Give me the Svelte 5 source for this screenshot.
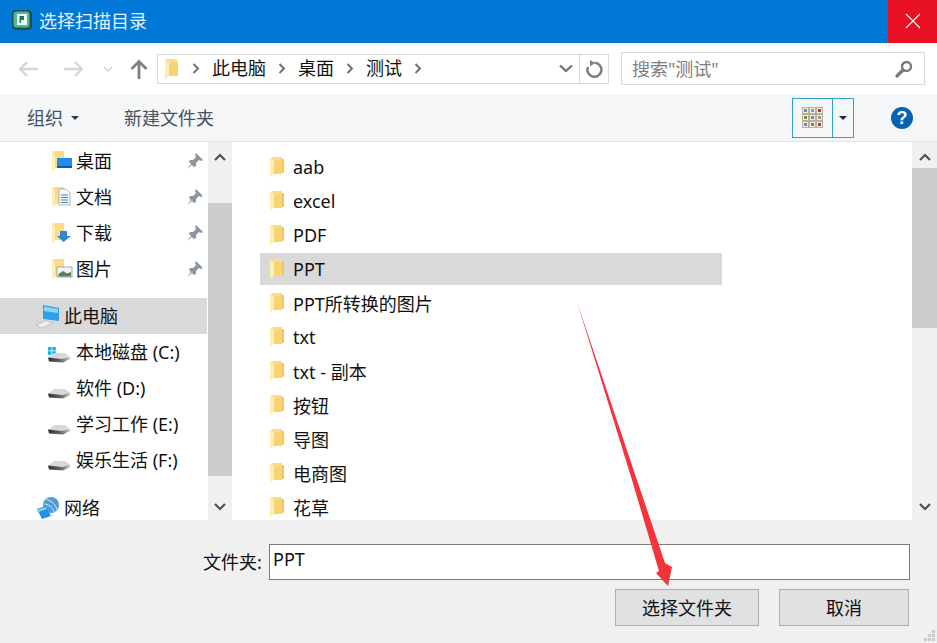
<script>
  const quick = [
    { name: '桌面', kind: 'desktop' },
    { name: '文档', kind: 'docs' },
    { name: '下载', kind: 'down' },
    { name: '图片', kind: 'pics' }
  ];
  const drives = [
    { name: '本地磁盘 (C:)', win: true },
    { name: '软件 (D:)' },
    { name: '学习工作 (E:)' },
    { name: '娱乐生活 (F:)' }
  ];
  const crumbs = ['此电脑', '桌面', '测试'];
  const folders = ['aab', 'excel', 'PDF', 'PPT', 'PPT所转换的图片', 'txt', 'txt - 副本', '按钮', '导图', '电商图', '花草'];
  const grid = ['#5b8fc7', '#8fa860', '#c8323c', '#8c8a2c', '#5b8fc7', '#8fa860', '#6f86b8', '#7c7f50', '#c8323c'];
</script>

{#snippet folder()}
  <svg class="folder" width="16" height="22" viewBox="0 0 16 22">
    <path d="M1 2 L4 1 H13 V18 H4 L1 21 Z" fill="#fbdc8c" />
    <path d="M1 2 L5 4 V18 L1 21 Z" fill="#fdeeb8" />
    <path d="M12 3 H15 V17 H12 Z" fill="#f3c55e" />
    <path d="M5 4 H13 V18 H5 Z" fill="#f9d274" />
  </svg>
{/snippet}

{#snippet pin()}
  <svg class="pin" width="18" height="18" viewBox="0 0 18 18">
    <path d="M10 1 L17 8 L15 9 L13 8 L10 11 L10 14 L8 15 L3 10 L4 8 L7 8 L10 5 L9 3 Z" fill="#8c96a0" />
    <path d="M5 12 L1 17 L6 13 Z" fill="#8c96a0" />
  </svg>
{/snippet}

{#snippet drive(win)}
  <svg class="drive" width="24" height="22" viewBox="0 0 24 22">
    <defs>
      <linearGradient id="strip" x1="0" x2="1" y1="0" y2="0">
        <stop offset="0" stop-color="#2e2e2e" />
        <stop offset="0.6" stop-color="#6a6a6a" />
        <stop offset="1" stop-color="#c8c8c8" />
      </linearGradient>
    </defs>
    {#if win}
      <path d="M1 6 h3.5 v3.5 h-3.5 Z M5.3 6 h3.5 v3.5 h-3.5 Z M1 10.3 h3.5 v3.5 h-3.5 Z M5.3 10.3 h3.5 v3.5 h-3.5 Z" fill="#12b4e4" />
    {/if}
    <path d="M1 17 L7 12 H18 L23 16 L16 19 Z" fill="#d8d8d8" />
    <path d="M1 16.5 L15 18 L23 16 V18 L16 21.5 L2 20.5 Z" fill="url(#strip)" />
  </svg>
{/snippet}

<div class="dialog">
  <header class="title">
    <svg class="appicon" width="20" height="20" viewBox="0 0 20 20">
      <rect x="0" y="0" width="20" height="20" rx="4" fill="#1e4f49" />
      <rect x="1.5" y="1.5" width="16" height="16" rx="3" fill="#52b79c" />
      <rect x="5" y="4" width="10" height="11" fill="#eef7f3" />
      <path d="M7.5 6 h4.5 v4 h-3 v3 h-1.5 Z" fill="#1c7a66" />
    </svg>
    <span class="title-text">选择扫描目录</span>
    <button class="close" aria-label="关闭">
      <svg width="16" height="16" viewBox="0 0 16 16"><path d="M1 1 L15 15 M15 1 L1 15" stroke="#fff" stroke-width="1.1" /></svg>
    </button>
  </header>

  <nav class="nav">
    <svg class="nav-back" width="22" height="18" viewBox="0 0 22 18"><path d="M21 9 H3 M10 2 L3 9 L10 16" fill="none" stroke="#d6d6d6" stroke-width="2.4" /></svg>
    <svg class="nav-forward" width="22" height="18" viewBox="0 0 22 18"><path d="M1 9 H19 M12 2 L19 9 L12 16" fill="none" stroke="#d6d6d6" stroke-width="2.4" /></svg>
    <svg class="nav-recent" width="10" height="6" viewBox="0 0 10 6"><path d="M1 1 L5 5 L9 1" fill="none" stroke="#d6d6d6" stroke-width="1.6" /></svg>
    <svg class="nav-up" width="18" height="20" viewBox="0 0 18 20"><path d="M9 20 V3 M1.5 10 L9 2.5 L16.5 10" fill="none" stroke="#808080" stroke-width="2.8" /></svg>
    <div class="address">
      <svg class="addr-folder" width="16" height="22" viewBox="0 0 16 22">
        <path d="M1 2 L4 1 H13 V18 H4 L1 21 Z" fill="#fbdc8c" />
        <path d="M1 2 L5 4 V18 L1 21 Z" fill="#fdeeb8" />
        <path d="M5 4 H14 V18 H5 Z" fill="#f9d274" />
      </svg>
      <div class="crumbs">
        {#each crumbs as c}
          <svg class="chev" width="8" height="11" viewBox="0 0 8 11"><path d="M1.5 1 L6 5.5 L1.5 10" fill="none" stroke="#6e6e6e" stroke-width="1.9" /></svg>
          <span class="shift">{c}</span>
        {/each}
        <svg class="chev" width="8" height="11" viewBox="0 0 8 11"><path d="M1.5 1 L6 5.5 L1.5 10" fill="none" stroke="#6e6e6e" stroke-width="1.9" /></svg>
      </div>
      <svg class="addr-drop" width="14" height="9" viewBox="0 0 14 9"><path d="M1 1.5 L7 7 L13 1.5" fill="none" stroke="#6e6e6e" stroke-width="2.2" /></svg>
      <div class="addr-refresh">
        <svg width="18" height="18" viewBox="0 0 18 18"><path d="M9.5 2.8 A7 7 0 1 1 3 7" fill="none" stroke="#808080" stroke-width="2.6" /><path d="M5 0 L10 3 L5 6.5 Z" fill="#808080" /></svg>
      </div>
    </div>
    <div class="search">
      <span class="shift">搜索"测试"</span>
      <svg width="18" height="18" viewBox="0 0 18 18"><circle cx="11.5" cy="6.5" r="4.5" fill="none" stroke="#7a7a7a" stroke-width="2.4" /><path d="M8 10 L2 16" stroke="#7a7a7a" stroke-width="3.2" stroke-linecap="round" /></svg>
    </div>
  </nav>

  <div class="toolbar">
    <span class="shift">组织</span>
    <svg class="caret" width="8" height="4" viewBox="0 0 8 4"><path d="M0 0 H8 L4 4 Z" fill="#2c3a4a" /></svg>
    <span class="shift new">新建文件夹</span>
    <div class="view">
      <div class="view-main">
        <div class="thumbs">
          {#each grid as color}
            <i class="thumb"><b style="background:{color}"></b></i>
          {/each}
        </div>
      </div>
      <div class="view-drop">
        <svg width="8" height="4" viewBox="0 0 8 4"><path d="M0 0 H8 L4 4 Z" fill="#1c2a44" /></svg>
      </div>
    </div>
    <div class="help">?</div>
  </div>

  <main class="main">
    <aside class="side">
      <div class="side-list">
        {#each quick as q}
          <div class="row quick">
            <span class="quick-icon">
              <svg width="24" height="22" viewBox="0 0 24 22">
                <path d="M1 2 L4 1 H13 V18 H4 L1 21 Z" fill="#fbdc8c" />
                <path d="M1 2 L4 4 V18 L1 21 Z" fill="#fdeeb8" />
                {#if q.kind === 'desktop'}
                  <rect x="6" y="8" width="15" height="10" fill="#1f8ee8" />
                  <rect x="6" y="16" width="15" height="2" fill="#0c5aa8" />
                {:else if q.kind === 'docs'}
                  <path d="M8 3 H15 L19 7 V19 H8 Z" fill="#f7f9fb" stroke="#9aa5b2" stroke-width="0.8" />
                  <path d="M10 9 H17 M10 11.5 H17 M10 14 H17 M10 16.5 H17" stroke="#3d87c8" stroke-width="1" />
                {:else if q.kind === 'down'}
                  <path d="M9 9 H16 V14 H20 L12.5 20 L6 14 H9 Z" fill="#2f87d6" />
                {:else}
                  <rect x="6" y="9" width="15" height="10" fill="#f3f5f7" stroke="#8d99a5" stroke-width="0.8" />
                  <path d="M7.5 16 L12 13 L16 15.5 L20 14 V18.5 H7.5 Z" fill="#5d7a64" />
                {/if}
              </svg>
            </span>
            <span class="label shift">{q.name}</span>
            {@render pin()}
          </div>
        {/each}

        <div class="row pc">
          <svg width="26" height="24" viewBox="0 0 26 24">
            <path d="M8 1 L24 4 V17 L8 15 Z" fill="#2f9fe6" />
            <path d="M9 2.5 L23 5 V9 L9 7 Z" fill="#8fd6f8" />
            <path d="M1 21 L11 16.5 L18 19 L7 24 Z" fill="#eceef0" stroke="#b4babf" stroke-width="0.8" />
          </svg>
          <span class="label shift">此电脑</span>
        </div>

        {#each drives as d}
          <div class="row dr">
            {@render drive(d.win)}
            <span class="label shift">{d.name}</span>
          </div>
        {/each}

        <div class="row net">
          <svg width="24" height="24" viewBox="0 0 24 24">
            <circle cx="15" cy="9" r="8" fill="#4e9bd8" />
            <path d="M10 3 C16 5 20 9 21 14 M8 8 C12 8 17 11 18 16" fill="none" stroke="#d6ecf9" stroke-width="1" />
            <path d="M1 13 L10 10 L15 20 L6 23 Z" fill="#1f93e0" />
            <path d="M1 14 L10 11 L11 13 L2 16 Z" fill="#8bd2f5" />
          </svg>
          <span class="label shift">网络</span>
        </div>
      </div>
      <div class="scroll side-scroll">
        <svg class="sb-up" width="12" height="8" viewBox="0 0 12 8"><path d="M1 7 L6 2 L11 7" fill="none" stroke="#505050" stroke-width="2.2" /></svg>
        <div class="thumb-bar"></div>
        <svg class="sb-down" width="12" height="8" viewBox="0 0 12 8"><path d="M1 1 L6 6 L11 1" fill="none" stroke="#505050" stroke-width="2.2" /></svg>
      </div>
    </aside>

    <section class="files">
      <div class="file-list">
        {#each folders as f}
          <div class="file" class:selected={f === 'PPT'}>
            {@render folder()}
            <span>{f}</span>
          </div>
        {/each}
      </div>
      <div class="scroll file-scroll">
        <svg class="sb-up" width="12" height="8" viewBox="0 0 12 8"><path d="M1 7 L6 2 L11 7" fill="none" stroke="#505050" stroke-width="2.2" /></svg>
        <div class="thumb-bar"></div>
        <svg class="sb-down" width="12" height="8" viewBox="0 0 12 8"><path d="M1 1 L6 6 L11 1" fill="none" stroke="#505050" stroke-width="2.2" /></svg>
      </div>
    </section>
  </main>

  <footer class="footer">
    <div class="name-line">
      <label class="name-label" for="folder-name">文件夹:</label>
      <input id="folder-name" class="name-input" value="PPT" />
    </div>
    <div class="buttons">
      <button class="btn primary">选择文件夹</button>
      <button class="btn cancel">取消</button>
    </div>
  </footer>

  <svg class="arrow" width="120" height="300" viewBox="0 0 120 300">
    <path d="M1 2 L61 180 L89 263 L96 267 L92 286 L80 273 L83 271 L56 180 Z" fill="#f5333a" />
  </svg>

  <svg class="grip" width="12" height="12" viewBox="0 0 12 12">
    <path d="M8 0 h3 v3 h-3 Z M4 4 h3 v3 h-3 Z M8 4 h3 v3 h-3 Z M0 8 h3 v3 h-3 Z M4 8 h3 v3 h-3 Z M8 8 h3 v3 h-3 Z" fill="#c8c8c8" />
  </svg>
</div>

<style>
  :global(body) {
    margin: 0;
    background: #f0f0f0;
  }
  .dialog {
    position: relative;
    width: 937px;
    height: 643px;
    overflow: hidden;
    display: flex;
    flex-direction: column;
    font-family: "Noto Sans", "Noto Sans CJK SC", sans-serif;
    font-size: 18px;
    color: #111;
  }
  .shift {
    padding-bottom: 2px;
  }
  .title {
    height: 43px;
    flex: none;
    background: #0078d7;
    display: flex;
    align-items: center;
    padding-left: 12px;
    color: #e3f1fb;
  }
  .appicon {
    margin-bottom: 3px;
  }
  .title-text {
    margin-left: 7px;
    padding-bottom: 4px;
  }
  .close {
    margin-left: auto;
    width: 49px;
    height: 43px;
    border: 0;
    padding: 0 0 2px;
    background: #e81123;
    display: flex;
    align-items: center;
    justify-content: center;
  }
  .nav {
    height: 51px;
    flex: none;
    background: #fff;
    display: flex;
    align-items: center;
    box-sizing: border-box;
    padding-left: 17px;
  }
  .nav-forward { margin-left: 24px; }
  .nav-recent { margin-left: 18px; }
  .nav-up { margin-left: 17px; }
  .address {
    margin-left: 9px;
    width: 452px;
    height: 30px;
    box-sizing: border-box;
    border: 1px solid #d9d9d9;
    display: flex;
    align-items: center;
    padding-left: 6px;
  }
  .addr-folder { flex: none; }
  .crumbs {
    display: flex;
    align-items: center;
    gap: 12px;
    margin-left: 12px;
    line-height: 26px;
  }
  .addr-drop { margin-left: auto; margin-right: 6px; }
  .addr-refresh {
    width: 29px;
    height: 28px;
    border-left: 1px solid #d9d9d9;
    display: flex;
    align-items: center;
    justify-content: center;
    box-sizing: border-box;
  }
  .search {
    margin-left: 12px;
    width: 304px;
    height: 33px;
    box-sizing: border-box;
    border: 1px solid #d9d9d9;
    display: flex;
    align-items: center;
    justify-content: space-between;
    padding: 0 11px 0 10px;
    color: #7d7d7d;
  }
  .toolbar {
    height: 47px;
    flex: none;
    box-sizing: content-box;
    background: #f5f6f7;
    border-bottom: 1px solid #e4e5e6;
    display: flex;
    align-items: center;
    padding-left: 27px;
    color: #43525f;
  }
  .caret { margin-left: 8px; }
  .new { margin-left: 45px; }
  .view {
    margin-left: auto;
    height: 40px;
    width: 62px;
    box-sizing: border-box;
    border: 1px solid #2ea3c8;
    display: flex;
  }
  .view-main {
    width: 39px;
    border-right: 1px solid #2ea3c8;
    display: flex;
    align-items: center;
    justify-content: center;
  }
  .thumbs {
    display: grid;
    grid-template-columns: repeat(3, 7px);
    grid-auto-rows: 7px;
    background: #b8b09c;
  }
  .thumb {
    display: block;
    padding: 1px;
    box-sizing: border-box;
    background: #f1eee6;
    border: 1px solid #b8b09c;
  }
  .thumb b {
    display: block;
    width: 100%;
    height: 100%;
  }
  .view-drop {
    flex: 1;
    display: flex;
    align-items: center;
    justify-content: center;
  }
  .help {
    margin-left: 37px;
    margin-right: 24px;
    width: 22px;
    height: 22px;
    border-radius: 50%;
    background: #0563b4;
    color: #fff;
    font-family: "Liberation Sans", sans-serif;
    font-weight: 700;
    font-size: 18px;
    line-height: 22px;
    text-align: center;
  }
  .main {
    flex: none;
    height: 378px;
    display: flex;
    background: #fff;
    overflow: hidden;
  }
  .side {
    width: 234px;
    flex: none;
    display: flex;
    overflow: hidden;
  }
  .side-list {
    width: 208px;
    flex: none;
    padding-top: 1px;
    box-sizing: border-box;
    overflow: hidden;
  }
  .row {
    height: 36px;
    display: flex;
    align-items: center;
  }
  .quick { padding-left: 51px; }
  .quick-icon { width: 25px; height: 22px; display: block; flex: none; }
  .quick-icon svg { display: block; }
  .pin { margin-left: auto; margin-right: 4px; }
  .pc {
    margin-top: 11px;
    background: #d9d9d9;
    width: 207px;
    padding-left: 35px;
    box-sizing: border-box;
    gap: 3px;
  }
  .dr { padding-left: 47px; gap: 5px; }
  .net {
    margin-top: 12px;
    padding-left: 36px;
    gap: 4px;
  }
  .scroll {
    width: 24px;
    flex: none;
    background: #f0f0f0;
    display: flex;
    flex-direction: column;
    align-items: center;
    height: 378px;
    box-sizing: border-box;
  }
  .file-scroll { width: 25px; }
  .sb-up { margin-top: 11px; flex: none; }
  .sb-down { margin-top: auto; margin-bottom: 9px; flex: none; }
  .thumb-bar {
    background: #cdcdcd;
    width: 100%;
    flex: none;
  }
  .side-scroll .thumb-bar { margin-top: 42px; height: 273px; }
  .file-scroll .thumb-bar { margin-top: 7px; height: 160px; }
  .files {
    flex: 1;
    display: flex;
    overflow: hidden;
  }
  .file-list {
    flex: 1;
    padding: 9px 0 0 26px;
    overflow: hidden;
    display: flex;
    flex-direction: column;
    gap: 2px;
  }
  .file {
    width: 462px;
    height: 32px;
    flex: none;
    box-sizing: border-box;
    padding-left: 9px;
    display: flex;
    align-items: center;
    gap: 8px;
    white-space: nowrap;
  }
  .file.selected { background: #d9d9d9; }
  .folder { flex: none; }
  .footer {
    flex: 1;
    background: #f0f0f0;
    box-sizing: border-box;
    padding-top: 24px;
  }
  .name-line {
    display: flex;
    align-items: center;
    height: 36px;
    padding-left: 203px;
  }
  .name-label { width: 66px; padding-bottom: 2px; }
  .name-input {
    width: 641px;
    height: 36px;
    box-sizing: border-box;
    border: 1px solid #7a7a7a;
    background: #fff;
    font: inherit;
    color: #111;
    padding: 0 0 6px 3px;
    outline: none;
    border-radius: 0;
  }
  .buttons {
    display: flex;
    margin-top: 9px;
    padding-left: 615px;
    gap: 20px;
  }
  .btn {
    height: 37px;
    box-sizing: border-box;
    background: #e1e1e1;
    border: 1px solid #adadad;
    font: inherit;
    color: #111;
    padding: 0 0 2px;
    border-radius: 0;
  }
  .primary { width: 144px; }
  .cancel { width: 130px; }
  .arrow {
    position: absolute;
    left: 576px;
    top: 300px;
  }
  .grip {
    position: absolute;
    right: 1px;
    bottom: 1px;
  }
</style>
